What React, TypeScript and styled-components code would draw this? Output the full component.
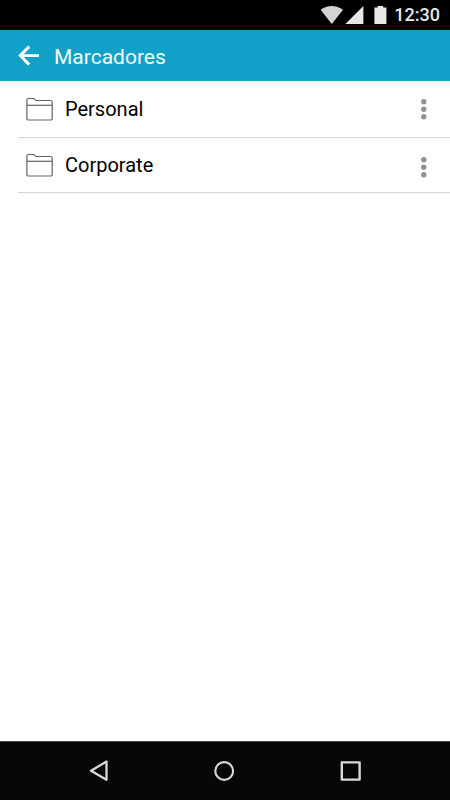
import React from 'react';
import styled, { createGlobalStyle } from 'styled-components';

const GlobalStyle = createGlobalStyle`
  *, *::before, *::after { box-sizing: border-box; }
  body { margin: 0; background: #fff; font-family: Roboto, "Liberation Sans", sans-serif; }
`;

const Screen = styled.div`
  display: flex;
  flex-direction: column;
  min-height: 100vh;
  background: #fff;
`;

const StatusBar = styled.div`
  display: flex;
  align-items: center;
  justify-content: flex-end;
  height: 30px;
  padding-right: 10px;
  background: #000;
  color: #e6e6e6;
`;

const StatusIcons = styled.svg`
  display: block;
  margin-right: 7px;
`;

const Clock = styled.time`
  font-size: 18px;
  font-weight: 500;
  line-height: 30px;
`;

const AppBar = styled.header`
  display: flex;
  align-items: center;
  gap: 13px;
  height: 51px;
  padding-left: 17px;
  background: #11a1c8;
  color: #fff;
`;

const IconButton = styled.button`
  display: flex;
  align-items: center;
  justify-content: center;
  padding: 0;
  border: 0;
  background: transparent;
  color: inherit;
  cursor: pointer;
`;

const Title = styled.h1`
  margin: 0;
  padding-top: 2px;
  font-size: 21px;
  font-weight: 400;
  line-height: 26px;
  color: #f4fafc;
`;

const BookmarkList = styled.ul`
  flex: 1;
  margin: 0;
  padding: 0 0 0 18px;
  list-style: none;
`;

const BookmarkRow = styled.li<{ $first?: boolean }>`
  display: flex;
  align-items: center;
  height: ${({ $first }) => ($first ? 57 : 55)}px;
  padding: 0 16px 0 8px;
  border-bottom: 1px solid #d3d2d7;
`;

const BookmarkLink = styled.a`
  display: flex;
  flex: 1;
  align-items: center;
  gap: 12px;
  color: #000;
  font-size: 20px;
  line-height: 24px;
  text-decoration: none;
`;

const MoreButton = styled(IconButton)<{ $first?: boolean }>`
  width: 20px;
  padding-top: ${({ $first }) => ($first ? 0 : 4)}px;
  color: #929292;
`;

const NavBar = styled.nav`
  display: grid;
  grid-template-columns: repeat(3, 1fr);
  height: 59px;
  padding: 0 37px 0 35px;
  border-top: 1px solid #4c4d4e;
  background: #050708;
  color: #dcd8da;
`;

const FolderIcon = () => (
  <svg width="27" height="24" viewBox="0 0 27 24" fill="none" stroke="#626262" strokeWidth="1.2" aria-hidden="true">
    <path d="M.9 21.8V2.9Q.9 1.5 2.3 1.5H7.4Q8.4 1.5 8.9 2.3L9.8 3.5H24.8Q26.2 3.5 26.2 4.9V21.8Q26.2 23 25 23H2.1Q.9 23 .9 21.8Z" />
    <path d="M.9 8.3H26.2" />
  </svg>
);

const folders = ['Personal', 'Corporate'];

export default function App() {
  return (
    <Screen>
      <GlobalStyle />
      <StatusBar>
        <StatusIcons width="67" height="20" viewBox="0 0 67 20" fill="#e8e8e8" aria-hidden="true">
          <path fill="#d3d3d5" d="M.6 4.8Q5.6 1 11.8 1T23 4.8L11.8 19Z" />
          <path d="M43.4 1V19H25.4Z" />
          <path d="M57.6 1H63.2V2.5H66.4V19H54.4V2.5H57.6Z" />
        </StatusIcons>
        <Clock>12:30</Clock>
      </StatusBar>
      <AppBar>
        <IconButton type="button" aria-label="Atrás">
          <svg width="24" height="24" viewBox="0 0 24 24" fill="none" stroke="currentColor" strokeWidth="2.9">
            <path d="M22 11.6H3.4M12.2 2.6L3.2 11.6L12.2 20.6" />
          </svg>
        </IconButton>
        <Title>Marcadores</Title>
      </AppBar>
      <BookmarkList>
        {folders.map((name, i) => (
          <BookmarkRow key={name} $first={i === 0}>
            <BookmarkLink href="#">
              <FolderIcon />
              {name}
            </BookmarkLink>
            <MoreButton type="button" aria-label={`Opciones de ${name}`} $first={i === 0}>
              <svg width="6" height="22" viewBox="0 0 6 22" fill="currentColor">
                <circle cx="2.8" cy="3.8" r="2.7" />
                <circle cx="2.8" cy="11.3" r="2.7" />
                <circle cx="2.8" cy="18.8" r="2.7" />
              </svg>
            </MoreButton>
          </BookmarkRow>
        ))}
      </BookmarkList>
      <NavBar>
        <IconButton type="button" aria-label="Volver">
          <svg width="24" height="24" viewBox="0 0 24 24" fill="none" stroke="currentColor" strokeWidth="2.3" strokeLinejoin="round">
            <path d="M20.5 2.6V20.8L5 11.8Z" />
          </svg>
        </IconButton>
        <IconButton type="button" aria-label="Inicio">
          <svg width="24" height="24" viewBox="0 0 24 24" fill="none" stroke="currentColor" strokeWidth="2.1">
            <circle cx="12.2" cy="12" r="8.9" />
          </svg>
        </IconButton>
        <IconButton type="button" aria-label="Recientes">
          <svg width="24" height="24" viewBox="0 0 24 24" fill="none" stroke="currentColor" strokeWidth="2.4" strokeLinejoin="round">
            <rect x="3.8" y="3.4" width="17.8" height="17.2" />
          </svg>
        </IconButton>
      </NavBar>
    </Screen>
  );
}
